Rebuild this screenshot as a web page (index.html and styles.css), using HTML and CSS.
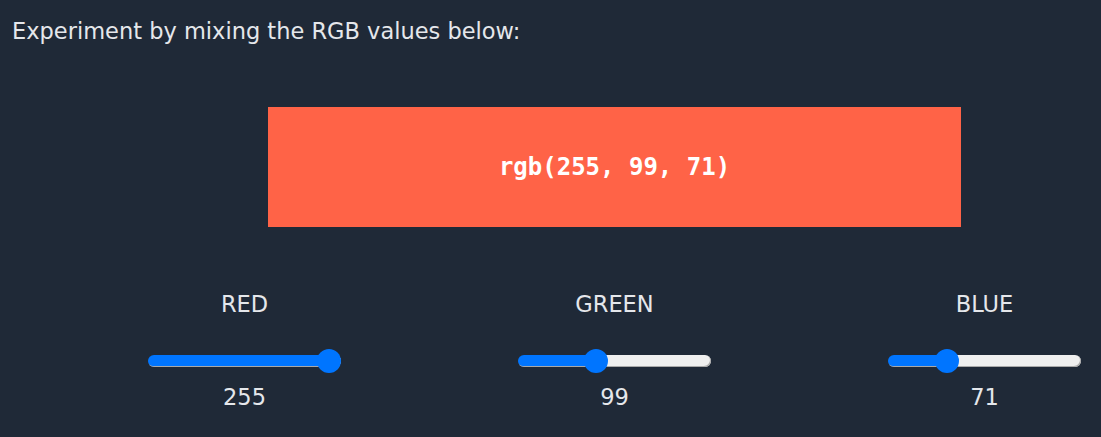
FILE: index.html
```html
<!DOCTYPE html>
<html lang="en">
<head>
<meta charset="utf-8">
<title>RGB Mixer</title>
<link rel="stylesheet" href="styles.css">
</head>
<body>
<p class="intro">Experiment by mixing the RGB values below:</p>
<main class="mixer">
  <div class="swatch"><span class="swatch-code">rgb(255, 99, 71)</span></div>
  <div class="channels">
    <div class="channel">
      <div class="channel-inner">
        <label class="channel-name" for="r">RED</label>
        <input class="slider" id="r" type="range" min="0" max="255" value="255" style="--p: 1">
        <span class="channel-value">255</span>
      </div>
    </div>
    <div class="channel">
      <div class="channel-inner">
        <label class="channel-name" for="g">GREEN</label>
        <input class="slider" id="g" type="range" min="0" max="255" value="99" style="--p: 0.38824">
        <span class="channel-value">99</span>
      </div>
    </div>
    <div class="channel">
      <div class="channel-inner">
        <label class="channel-name" for="b">BLUE</label>
        <input class="slider" id="b" type="range" min="0" max="255" value="71" style="--p: 0.27843">
        <span class="channel-value">71</span>
      </div>
    </div>
  </div>
</main>
</body>
</html>
```
FILE: styles.css
```css
html {
  overflow: hidden;
  background: #1f2937;
}
body {
  margin: 0;
  padding: 0 12px;
  background: #1f2937;
  color: #e5e7eb;
  font-family: "DejaVu Sans", Verdana, sans-serif;
  font-size: 22.5px;
  line-height: 26px;
}
.intro {
  margin: 0;
  padding-top: 18px;
}
.mixer {
  margin: 63px -12px 0 47.5px;
}
.swatch {
  width: 693px;
  height: 120px;
  margin-left: 208.5px;
  background: rgb(255, 99, 71);
  display: flex;
  align-items: center;
  justify-content: center;
}
.swatch-code {
  color: #ffffff;
  font-family: "DejaVu Sans Mono", "Liberation Mono", monospace;
  font-weight: bold;
  font-size: 24px;
  line-height: 28px;
}
.channels {
  display: grid;
  grid-template-columns: 370px 370px 1fr;
  margin-top: 63.5px;
}
.channel {
  padding-left: 88.25px;
}
.channel-inner {
  width: 193.5px;
  display: flex;
  flex-direction: column;
  align-items: center;
}
.channel-name {
  display: block;
}
.slider {
  -webkit-appearance: none;
  appearance: none;
  display: block;
  width: 193.5px;
  height: 24px;
  margin: 32.5px 0 0;
  padding: 0;
  background: transparent;
}
.slider::-webkit-slider-runnable-track {
  height: 12px;
  border-radius: 6px;
  background: linear-gradient(to right, #0075ff calc(12px + var(--p) * 169.5px), #efefef calc(12px + var(--p) * 169.5px));
  box-shadow: inset -1px -1px 0 0 #a9a9a9;
}
.slider::-webkit-slider-thumb {
  -webkit-appearance: none;
  appearance: none;
  width: 24px;
  height: 24px;
  margin-top: -6px;
  border: none;
  border-radius: 50%;
  background: #0075ff;
}
.channel-value {
  display: block;
  margin-top: 10.5px;
}
```
